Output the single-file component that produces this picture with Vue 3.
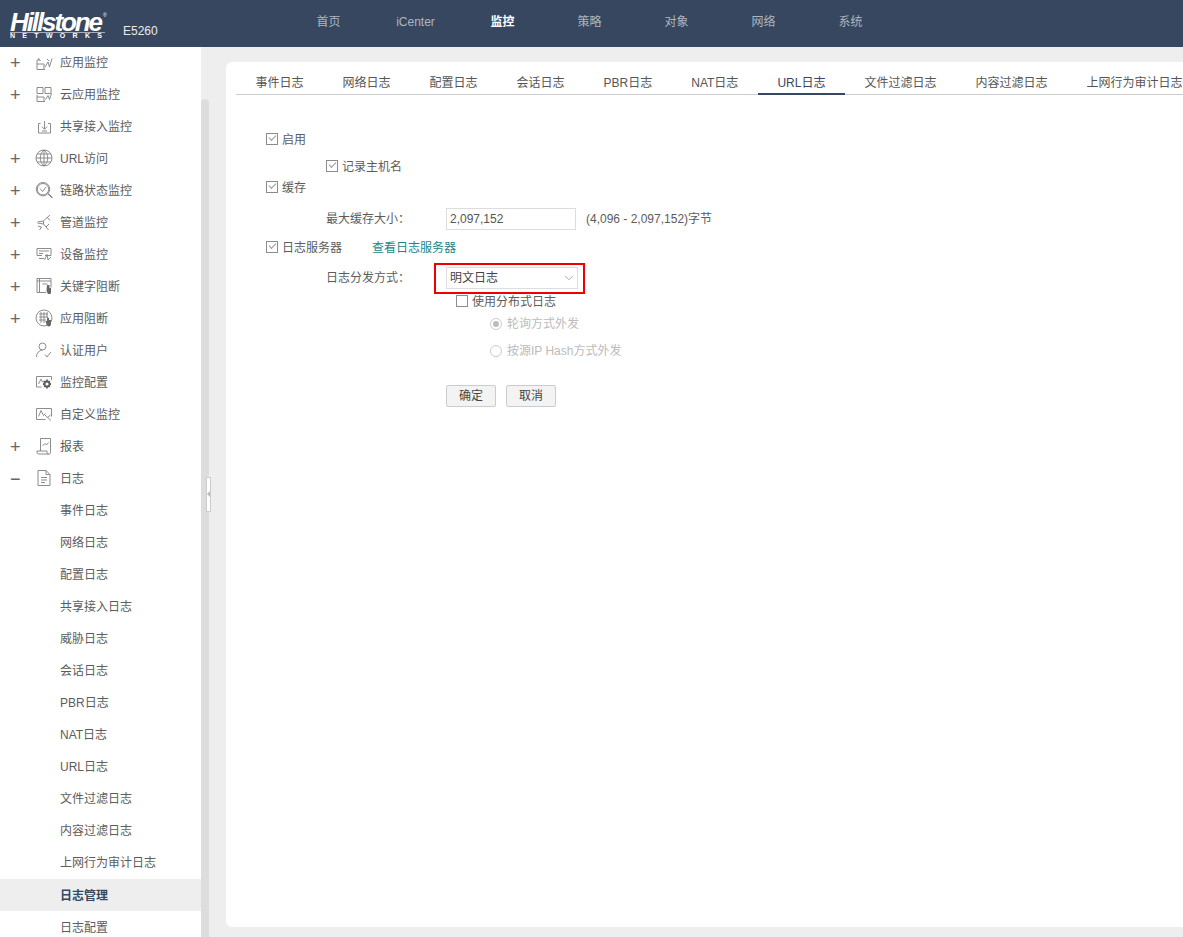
<template>
  <div class="page">
    <header class="top">
      <div class="logo">
        <div class="brand">Hillstone<sup>®</sup></div>
        <div class="networks">NETWORKS</div>
      </div>
      <div class="model">E5260</div>
      <nav class="nav">
        <a v-for="n in nav" :key="n" :class="{ on: n === '监控' }">{{ n }}</a>
      </nav>
    </header>

    <div class="body">
      <aside class="side">
        <div
          v-for="m in menu"
          :key="m.text"
          class="row"
          :class="{ sel: m.sel }"
        >
          <span class="sign">{{ m.sign }}</span>
          <span class="ico">
            <svg v-if="m.icon" width="20" height="20" viewBox="0 0 20 20" fill="none" stroke="#808080" stroke-width="0.9">
              <path v-for="d in icons[m.icon]" :key="d" :d="d" />
              <path v-if="bold[m.icon]" :d="bold[m.icon]" stroke="#5c5c5c" stroke-width="1.8" />
              <path v-if="fills[m.icon]" :d="fills[m.icon]" fill="#666" stroke="none" />
            </svg>
          </span>
          <span>{{ m.text }}</span>
        </div>
      </aside>
      <div class="track"><div class="thumb"></div></div>
      <div class="handle"><i></i></div>

      <main class="main">
        <section class="card">
          <div class="tabs">
            <a v-for="t in tabs" :key="t" :class="{ on: t === 'URL日志' }">{{ t }}</a>
          </div>

          <form class="form" @submit.prevent>
            <div class="line l-en">
              <span class="cb on"></span><span>启用</span>
            </div>
            <div class="line l-host">
              <span class="cb on"></span><span>记录主机名</span>
            </div>
            <div class="line l-cache">
              <span class="cb on"></span><span>缓存</span>
            </div>
            <div class="line l-size">
              <label class="lbl">最大缓存大小：</label>
              <input class="inp" value="2,097,152" />
              <span class="hint">(4,096 - 2,097,152)字节</span>
            </div>
            <div class="line l-srv">
              <span class="cb on"></span><span>日志服务器</span>
              <a class="link">查看日志服务器</a>
            </div>
            <div class="line l-mode">
              <label class="lbl">日志分发方式：</label>
              <div class="sel-box">
                <span>明文日志</span>
                <svg width="10" height="6" viewBox="0 0 10 6" fill="none" stroke="#aaa"><path d="M1 .8 5 4.800 9 .8" /></svg>
                <div class="redbox"></div>
              </div>
            </div>
            <div class="line l-dist">
              <span class="cb"></span><span>使用分布式日志</span>
            </div>
            <div class="line l-r1 off">
              <span class="radio on"></span><span>轮询方式外发</span>
            </div>
            <div class="line l-r2 off">
              <span class="radio"></span><span>按源IP Hash方式外发</span>
            </div>
            <div class="line l-btn">
              <button class="btn">确定</button>
              <button class="btn">取消</button>
            </div>
          </form>
        </section>
      </main>
    </div>
  </div>
</template>

<script setup>
const nav = ["首页", "iCenter", "监控", "策略", "对象", "网络", "系统"];

const tabs = [
  "事件日志", "网络日志", "配置日志", "会话日志", "PBR日志", "NAT日志",
  "URL日志", "文件过滤日志", "内容过滤日志", "上网行为审计日志",
];

const menu = [
  { text: "应用监控", sign: "+", icon: "app" },
  { text: "云应用监控", sign: "+", icon: "cloud" },
  { text: "共享接入监控", icon: "share" },
  { text: "URL访问", sign: "+", icon: "globe" },
  { text: "链路状态监控", sign: "+", icon: "link" },
  { text: "管道监控", sign: "+", icon: "pipe" },
  { text: "设备监控", sign: "+", icon: "device" },
  { text: "关键字阻断", sign: "+", icon: "key" },
  { text: "应用阻断", sign: "+", icon: "block" },
  { text: "认证用户", icon: "user" },
  { text: "监控配置", icon: "conf" },
  { text: "自定义监控", icon: "custom" },
  { text: "报表", sign: "+", icon: "report" },
  { text: "日志", sign: "−", icon: "log" },
  { text: "事件日志" },
  { text: "网络日志" },
  { text: "配置日志" },
  { text: "共享接入日志" },
  { text: "威胁日志" },
  { text: "会话日志" },
  { text: "PBR日志" },
  { text: "NAT日志" },
  { text: "URL日志" },
  { text: "文件过滤日志" },
  { text: "内容过滤日志" },
  { text: "上网行为审计日志" },
  { text: "日志管理", sel: true },
  { text: "日志配置" },
];

const icons = {
  app: ["M3 8h3", "M3 8v9.500h8", "M3 12h7", "M4 6l2.500 3", "M10 12v5.500", "M11 15l3-5 1.500 5 2.500-8.500", "M13 7l2 2"],
  cloud: ["M3 3.500h6v6H3z", "M11 3.500h6v6h-6z", "M3 11v6.500h8", "M3 13h7", "M10 13v4.500", "M11.500 15.500l2.500-4 1.500 4 2-6"],
  share: ["M6.500 7.500H4.500v9.500h12V7.500H14", "M10.500 5v8", "M7.800 10.500l2.700 2.800 2.700-2.800", "M8 15h5"],
  globe: ["M10 2a8 8 0 1 0 0 16 8 8 0 0 0 0-16z", "M10 2c-5 4-5 12 0 16M10 2c5 4 5 12 0 16", "M10 2v16M2 10h16M3.200 6h13.600M3.200 14h13.600"],
  link: ["M9 2.500a6.700 6.700 0 1 0 0 13.400 6.700 6.700 0 0 0 0-13.400z", "M9 3.500a5.700 5.700 0 1 0 0 11.400A5.700 5.700 0 0 0 9 3.500", "M6 8.500l2.500 3 3.500-4.500", "M14 14l4 4", "M14.500 13.500l4 4"],
  pipe: ["M3.500 10l6-1 6.500-6", "M3.500 11l6 1 5 6", "M9.500 9v3", "M13 5l3 3.500", "M12 15l3-3", "M4 14l3.500 1-2 3"],
  device: ["M3 4.500h14v7h-6", "M3 4.500v7h5", "M5 7h10", "M5 9.500h4", "M5 14.500h5", "M10.500 16l2.500-5.500 1 5.500 3-3"],
  key: ["M3 2.500h14v9", "M3 2.500v14h9", "M3 5h14", "M5.500 2.500v14", "M8.500 8h5"],
  block: ["M10 2a8 8 0 1 0 0 16 8 8 0 0 0 0-16z", "M5 6h9M5 9h9M5 12h7M7 4v11M10 4v11M13 4v6"],
  user: ["M8.500 3a3.500 3.500 0 1 0 0 7 3.500 3.500 0 0 0 0-7z", "M2.500 17c0-4 2.500-6.500 6-7", "M11 14.500l2 2.500 4-5"],
  conf: ["M2.500 4.500h15V8", "M2.500 4.500v10.500h5", "M4.500 12l2.500-5 1.500 3 1.500-1"],
  custom: ["M2.500 4.500h15v8", "M2.500 4.500v11h9", "M4.500 12.500l2.500-6 2.500 5 2-2", "M11 11l6 5.500", "M16.500 11l-3 2.500"],
  report: ["M6.500 15V2.500h10v14.200a1.400 1.400 0 0 1-1.400 1.300H4.500", "M4.500 18a1.500 1.500 0 0 1-1.500-1.500V15h10v1.500a1.500 1.500 0 0 0 1.500 1.500", "M8.500 10l2.500-2.500 1.500 1.500 2-2.500"],
  log: ["M4 2.500h8l4 4v11H4z", "M12 2.500v4h4", "M7 9.500h6", "M7 12h6", "M7 14.500h4"],
};

const bold = {
  conf: "M13 9.500a2.500 2.500 0 1 0 0 5 2.500 2.500 0 0 0 0-5zM13 7.500v1M13 15.500v1M9 12h1M16 12h1M10.200 9.200l.7.7M15.100 14.100l.7.7M10.200 14.800l.7-.7M15.100 9.900l.7-.7",
};

const fills = {
  key: "M13 9h2.500v3h1.500v4.500c0 1-.8 1.500-1.500 1.500H14l-1.500-3z",
  block: "M13 10h2v2h2v4c0 1.500-1 2.500-2.200 2.500S12.500 17 12 15l-.5-2H13z",
};
</script>

<style>
html,
body {
  margin: 0;
  height: 100%;
  overflow: hidden;
}
</style>

<style scoped>
.page {
  height: 937px;
  display: flex;
  flex-direction: column;
  overflow: hidden;
  font: 12px/16px "Liberation Sans", "Noto Sans CJK SC", sans-serif;
  color: #5c5c5c;
  background: #eee;
}

.top {
  flex: 0 0 47px;
  display: flex;
  background: #36475f;
  position: relative;
}
.logo {
  width: 113px;
  padding: 12px 0 0 10px;
  color: #fff;
  box-sizing: border-box;
}
.brand {
  font: italic bold 26px/20px "Liberation Sans", sans-serif;
  letter-spacing: -2.1px;
  border-bottom: 1px solid #aab;
  width: 95px;
  white-space: nowrap;
  height: 20px;
}
.brand sup {
  font-size: 5px;
  font-style: normal;
  font-weight: 400;
  vertical-align: top;
  line-height: 6px;
  letter-spacing: 0;
  margin-left: 2px;
}
.networks {
  font: bold 7px/6px "Liberation Sans", sans-serif;
  letter-spacing: 7.3px;
  white-space: nowrap;
  width: 95px;
}
.model {
  color: #e8ebef;
  margin-top: 23px;
  font-size: 12px;
  line-height: 16px;
  width: 52px;
  padding-left: 10px;
  box-sizing: border-box;
}
.nav {
  display: flex;
  margin-left: 120px;
}
.nav a {
  width: 87px;
  text-align: center;
  line-height: 44px;
  color: #aeb6c1;
}
.nav a.on {
  color: #fff;
  font-weight: 700;
}

.body {
  flex: 1;
  display: flex;
  min-height: 0;
  position: relative;
}

.side {
  width: 201px;
  background: #fff;
  overflow: hidden;
  flex: none;
}
.row {
  height: 32px;
  box-sizing: border-box;
  display: flex;
  align-items: center;
  white-space: nowrap;
}
.row.sel {
  background: #eee;
  color: #36475f;
  font-weight: 700;
}
.row.sel,
.row.sel + .row {
  padding-top: 2px;
}
.sign {
  width: 34px;
  padding-left: 10px;
  box-sizing: border-box;
  font-size: 18px;
  color: #666;
  flex: none;
}
.ico {
  width: 26px;
  height: 20px;
  margin-top: -2px;
  flex: none;
}

.track {
  width: 8px;
  flex: none;
  padding-top: 52px;
  box-sizing: border-box;
}
.thumb {
  height: 100%;
  background: #ddd;
  border-radius: 4px 4px 0 0;
}
.handle {
  position: absolute;
  left: 206px;
  top: 430px;
  width: 5px;
  height: 35px;
  box-sizing: border-box;
  background: #fff;
  border: 1px solid #ccc;
}
.handle i {
  position: absolute;
  left: 0;
  top: 13px;
  border: 3px solid transparent;
  border-right-color: #bbb;
  border-left: 0;
}

.main {
  flex: 1;
  min-width: 0;
  display: flex;
  padding: 15px 0 10px 17px;
}
.card {
  flex: 1;
  min-width: 0;
  background: #fff;
  border-radius: 6px 0 0 6px;
  overflow: hidden;
  padding: 0 0 0 10px;
}

.tabs {
  display: flex;
  height: 32px;
  border-bottom: 1px solid #ccc;
  white-space: nowrap;
  margin-right: -40px;
}
.tabs a {
  padding: 13px 19.5px 0;
  height: 32px;
  box-sizing: border-box;
  line-height: 16px;
  color: #555;
}
.tabs a.on {
  color: #36475f;
  border-bottom: 2px solid #36475f;
  height: 33px;
}

.form {
  position: relative;
  padding-left: 30px;
}
.line {
  display: flex;
  align-items: center;
  height: 16px;
  white-space: nowrap;
}
.l-en { margin-top: 37px; }
.l-host { margin-top: 11px; padding-left: 60px; }
.l-cache { margin-top: 5px; }
.l-size { margin-top: 12px; padding-left: 60px; height: 22px; }
.l-srv { margin-top: 10px; }
.l-mode { margin-top: 11px; padding-left: 60px; height: 22px; }
.l-dist { margin-top: 5px; padding-left: 190px; }
.l-r1 { margin-top: 6px; padding-left: 224px; }
.l-r2 { margin-top: 11px; padding-left: 224px; }
.l-btn { margin-top: 26px; padding-left: 180px; height: 22px; gap: 10px; }

.off { color: #bbb; }

.cb {
  width: 12px;
  height: 12px;
  box-sizing: border-box;
  border: 1px solid #8c8c8c;
  margin: -3px 4px 0 0;
  flex: none;
  position: relative;
}
.cb.on::after {
  content: "";
  position: absolute;
  left: 2px;
  top: 1.500px;
  width: 6px;
  height: 3px;
  border: solid #999;
  border-width: 0 0 1px 1px;
  transform: rotate(-45deg);
}

.radio {
  width: 12px;
  height: 12px;
  box-sizing: border-box;
  border: 1px solid #ccc;
  border-radius: 50%;
  margin-right: 5px;
  flex: none;
  position: relative;
}
.radio.on::after {
  content: "";
  position: absolute;
  left: 2px;
  top: 2px;
  width: 6px;
  height: 6px;
  border-radius: 50%;
  background: #bbb;
}

.lbl {
  width: 120px;
  flex: none;
}
.inp {
  width: 130px;
  height: 22px;
  box-sizing: border-box;
  border: 1px solid #ddd;
  padding: 0 3px;
  font: inherit;
  color: #555;
  outline: none;
}
.hint {
  margin-left: 10px;
}
.link {
  margin-left: 30px;
  color: #1d8585;
}

.sel-box {
  position: relative;
  width: 132px;
  height: 22px;
  box-sizing: border-box;
  border: 1px solid #ddd;
  padding: 0 3px;
  display: flex;
  align-items: center;
  justify-content: space-between;
  color: #444;
}
.redbox {
  position: absolute;
  left: -13px;
  top: -5px;
  width: 151px;
  height: 31px;
  box-sizing: border-box;
  border: 2px solid #ee0000;
}

.btn {
  width: 50px;
  height: 22px;
  padding: 0;
  box-sizing: border-box;
  border: 1px solid #ccc;
  border-radius: 2px;
  background: #f3f3f3;
  font: inherit;
  color: #444;
}
</style>
